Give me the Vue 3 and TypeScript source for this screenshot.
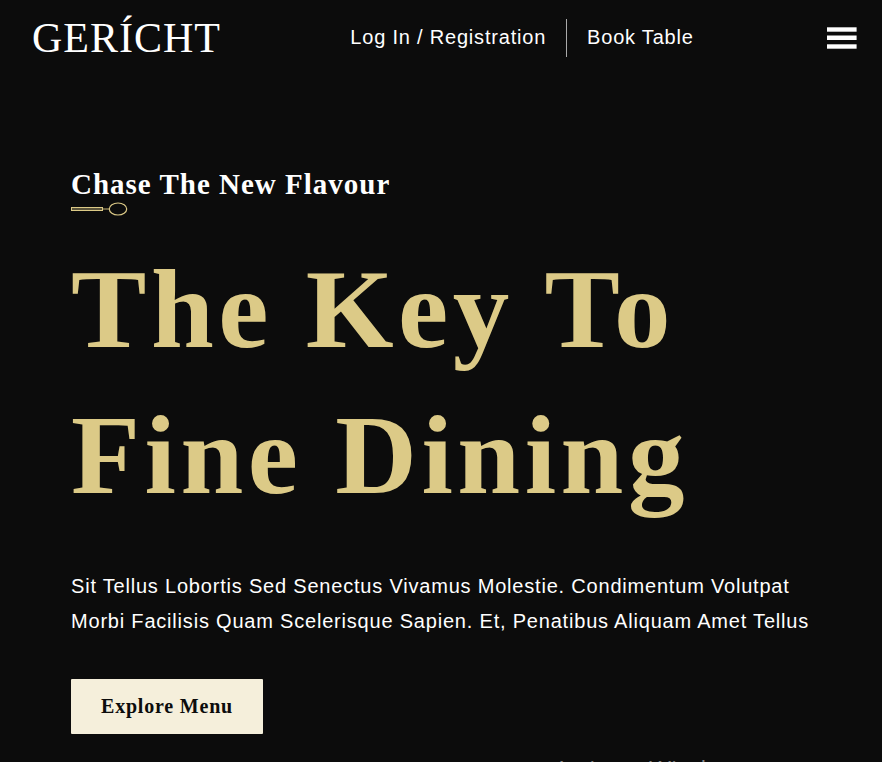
<script setup lang="ts">
import { ref } from 'vue'

const menuOpen = ref<boolean>(false)
const brand = 'GERÍCHT'
</script>

<template>
  <div class="page">
    <header class="navbar">
      <a class="brand" href="#home">{{ brand }}</a>
      <nav class="account" aria-label="Account">
        <a href="#login">Log In / Registration</a>
        <span class="divider"></span>
        <a href="#book">Book Table</a>
      </nav>
      <button
        class="menu-toggle"
        type="button"
        aria-label="Menu"
        :aria-expanded="menuOpen"
        @click="menuOpen = !menuOpen"
      >
        <svg width="30" height="22" viewBox="0 0 30 22" fill="#fff" aria-hidden="true">
          <rect x="0" y="0.3" width="29.6" height="4.4" />
          <rect x="0" y="8.5" width="29.6" height="4.5" />
          <rect x="0" y="17.3" width="29.6" height="4.4" />
        </svg>
      </button>
    </header>

    <main class="hero">
      <p class="tagline">Chase The New Flavour</p>
      <svg class="spoon" width="57" height="14" viewBox="0 0 57 14" fill="none" stroke="#dcca87" aria-hidden="true">
        <rect x="0.5" y="5.5" width="31" height="3" fill="#5a5339" />
        <path d="M32 7H38" stroke="#84794f" stroke-width="1.6" />
        <ellipse cx="47" cy="7" rx="8.7" ry="6" stroke-width="1.2" />
      </svg>
      <h1 class="title">The Key To Fine Dining</h1>
      <p class="lead">
        Sit Tellus Lobortis Sed Senectus Vivamus Molestie. Condimentum Volutpat Morbi
        Facilisis Quam Scelerisque Sapien. Et, Penatibus Aliquam Amet Tellus
      </p>
      <button class="explore" type="button">Explore Menu</button>
    </main>

    <div class="watermark">Activate Windows</div>
  </div>
</template>

<style>
body {
  background: #0c0c0c;
}
</style>

<style scoped>
.page {
  position: relative;
  height: 100vh;
  overflow: hidden;
  background: #0c0c0c;
  color: #fff;
  font-family: "Liberation Sans", Arial, sans-serif;
  font-size: 20px;
  letter-spacing: 0.04em;
}

.navbar {
  display: flex;
  align-items: center;
  justify-content: space-between;
  height: 76px;
  padding: 0 25px 0 32px;
}

.brand {
  color: #fff;
  font-family: "Liberation Serif", "Times New Roman", serif;
  font-size: 42px;
  line-height: 48px;
  letter-spacing: 1px;
  text-decoration: none;
}

.account {
  display: flex;
  align-items: center;
  gap: 20px;
  padding-right: 4px;
}

.account a {
  padding-bottom: 2px;
  color: #fff;
  line-height: 36px;
  text-decoration: none;
}

.divider {
  width: 1px;
  height: 38px;
  background: #aaa;
}

.menu-toggle {
  display: flex;
  padding: 0;
  border: 0;
  background: none;
  cursor: pointer;
}

.hero {
  display: flex;
  flex-direction: column;
  align-items: flex-start;
  padding: 90px 71px 28px;
}

.tagline {
  margin: 0;
  font-family: "Liberation Serif", "Times New Roman", serif;
  font-size: 29px;
  font-weight: 700;
  line-height: 36px;
  letter-spacing: 1px;
}

.spoon {
  display: block;
}

.title {
  margin: 20px 0 41px;
  color: #dcca87;
  font-family: "Liberation Serif", "Times New Roman", serif;
  font-size: 113px;
  font-weight: 700;
  line-height: 146px;
  letter-spacing: 0.04em;
}

.lead {
  margin: 0 0 40px;
  line-height: 35px;
}

.explore {
  padding: 10px 30px;
  border: 0;
  border-radius: 1px;
  background: #f5efdb;
  color: #0c0c0c;
  font-family: "Liberation Serif", "Times New Roman", serif;
  font-size: 20px;
  font-weight: 700;
  line-height: 35px;
  letter-spacing: 0.04em;
  cursor: pointer;
}

.watermark {
  position: absolute;
  bottom: -23px;
  right: 131px;
  color: #858585;
  font-family: "Open Sans", sans-serif;
  font-size: 24px;
  line-height: 32px;
  letter-spacing: normal;
  white-space: nowrap;
}
</style>
